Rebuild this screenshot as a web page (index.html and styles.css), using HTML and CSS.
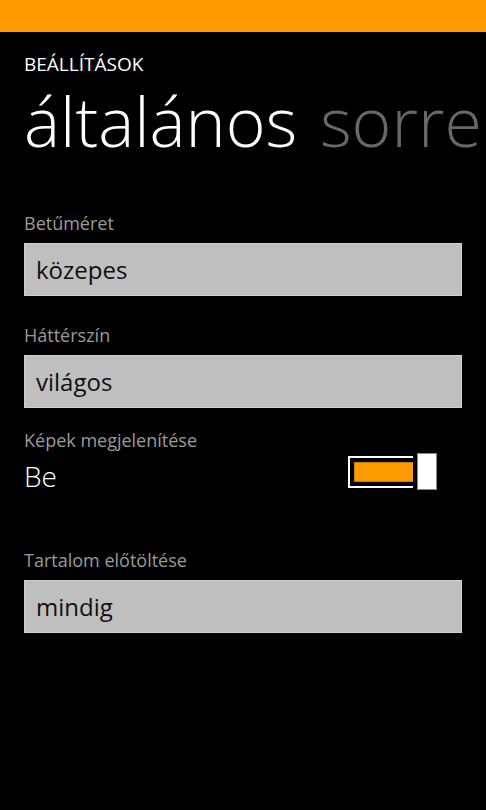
FILE: index.html
```html
<!DOCTYPE html>
<html lang="hu">
<head>
    <meta charset="UTF-8">
    <title>Beállítások</title>
    <link rel="stylesheet" href="styles.css">
</head>
<body>
<div class="systemTray"></div>
<div class="page">
    <div class="appTitle">BEÁLLÍTÁSOK</div>
    <div class="pivot">
        <span class="pivotItem current">általános</span>
        <span class="pivotItem">sorrend</span>
    </div>

    <div class="setting first">
        <div class="label">Betűméret</div>
        <div class="picker">közepes</div>
    </div>
    <div class="setting">
        <div class="label">Háttérszín</div>
        <div class="picker">világos</div>
    </div>
    <div class="setting toggleSetting">
        <div class="label">Képek megjelenítése</div>
        <div class="toggleRow">
            <span class="toggleText">Be</span>
            <span class="toggle">
                <span class="track"><span class="fill"></span></span>
                <span class="thumb"></span>
            </span>
        </div>
    </div>
    <div class="setting afterToggle">
        <div class="label">Tartalom előtöltése</div>
        <div class="picker">mindig</div>
    </div>
</div>
</body>
</html>
```

FILE: styles.css
```css
body{
    margin: 0;
    background-color: #000000;
    color: #ffffff;
    font-family: "Open Sans", "Noto Sans", sans-serif;
    overflow: hidden;
}
.systemTray{
    height: 32px;
    background-color: #ff9a00;
}
.page{
    padding-left: 24px;
    padding-right: 24px;
}
.appTitle{
    margin-top: 20px;
    font-size: 19px;
    line-height: 24px;
    height: 24px;
}
.pivot{
    white-space: nowrap;
    overflow: hidden;
    margin-right: -24px;
    margin-top: 10px;
    height: 70px;
    font-weight: 300;
    font-size: 68px;
    line-height: 70px;
}
.pivotItem{
    color: #686868;
    margin-right: 5px;
}
.pivotItem.current{
    color: #ffffff;
}
.label{
    font-size: 18px;
    line-height: 24px;
    height: 24px;
    color: #9a9a9a;
    margin-top: 27px;
}
.first .label{
    margin-top: 55px;
}
.picker{
    margin-top: 8px;
    height: 53px;
    line-height: 51px;
    background-color: #bfbfbf;
    border: 1px solid #cfcfcf;
    color: #111111;
    font-size: 24px;
    padding-left: 11px;
    box-sizing: border-box;
}
.toggleSetting .label{
    margin-top: 20px;
}
.toggleRow{
    display: flex;
    justify-content: space-between;
    align-items: flex-start;
    height: 52px;
    padding-right: 25px;
}
.toggleText{
    font-size: 28px;
    line-height: 48px;
    font-weight: 300;
}
.toggle{
    display: flex;
    align-items: center;
    margin-top: 1px;
}
.track{
    width: 65px;
    height: 32px;
    box-sizing: border-box;
    border: 2px solid #ffffff;
    border-right: none;
    padding: 4px 0 4px 4px;
    display: flex;
}
.fill{
    flex: 1;
    background-color: #ff9a00;
    border: 1px solid #cc7a00;
    border-right: none;
}
.thumb{
    width: 20px;
    height: 37px;
    margin-left: 4px;
    background-color: #ffffff;
    box-sizing: border-box;
    border: 1px solid #888888;
}
.afterToggle .label{
    margin-top: 44px;
}
```
